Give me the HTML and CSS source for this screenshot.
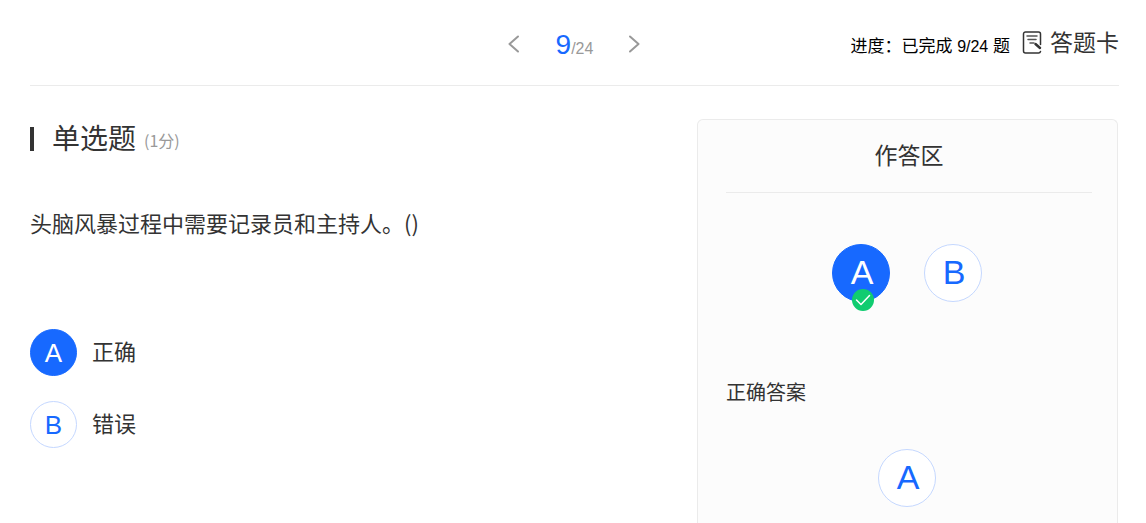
FILE: index.html
```html
<!DOCTYPE html>
<html lang="zh-CN">
<head>
<meta charset="utf-8">
<meta name="viewport" content="width=device-width, initial-scale=1">
<title>单选题</title>
<link rel="stylesheet" href="styles.css">
</head>
<body>
<div class="page">
  <header class="topbar">
    <nav class="pager" aria-label="题目导航">
      <button class="pager-btn" type="button" aria-label="上一题">
        <svg width="12" height="18" viewBox="0 0 12 18"><path d="M10 1.500 1.500 9l8.500 7.500"/></svg>
      </button>
      <div class="pager-count"><span class="pager-current">9</span><span class="pager-total">/24</span></div>
      <button class="pager-btn" type="button" aria-label="下一题">
        <svg width="12" height="18" viewBox="0 0 12 18"><path d="M1 1.500 9.500 9 1 16.500"/></svg>
      </button>
    </nav>
    <div class="status">
      <span class="progress">进度：已完成 <span class="progress-count">9/24</span> 题</span>
      <button class="card-btn" type="button">
        <svg class="card-icon" width="20" height="23" viewBox="0 0 20 23">
          <path d="M18.500 13.500V3a2 2 0 0 0-2-2h-13a2 2 0 0 0-2 2v17a2 2 0 0 0 2 2h13a2 2 0 0 0 2-1.500"/>
          <path class="lines" d="M5 5h10M6 8.500h8M8 12h4"/>
          <path class="pen" d="m13.500 13 4.500 4"/>
        </svg>
        <span>答题卡</span>
      </button>
    </div>
  </header>
  <main class="content">
    <section class="question">
      <h1 class="question-type">单选题<span class="score">(1分)</span></h1>
      <p class="question-text">头脑风暴过程中需要记录员和主持人。()</p>
      <ul class="options">
        <li><button class="option" type="button"><span class="letter selected">A</span><span class="option-label">正确</span></button></li>
        <li><button class="option" type="button"><span class="letter">B</span><span class="option-label">错误</span></button></li>
      </ul>
    </section>
    <aside class="panel">
      <h2 class="panel-title">作答区</h2>
      <div class="choices">
        <button class="letter large selected" type="button">A
          <svg class="check" width="22" height="22" viewBox="0 0 22 22"><circle cx="11" cy="11" r="11"/><path d="m4.500 11 4.500 4.500 8.500-9"/></svg>
        </button>
        <button class="letter large" type="button">B</button>
      </div>
      <h3 class="answer-title">正确答案</h3>
      <div class="answer"><span class="letter large">A</span></div>
    </aside>
  </main>
</div>
</body>
</html>
```
FILE: styles.css
```css
* { box-sizing: border-box; }

body {
  margin: 0;
  background: #fff;
  color: #333;
  font-family: "Liberation Sans", "Noto Sans CJK SC", sans-serif;
}

button {
  padding: 0;
  border: 0;
  background: none;
  color: inherit;
  font: inherit;
  cursor: pointer;
}

svg {
  display: block;
  fill: none;
  stroke-linecap: round;
  stroke-linejoin: round;
}

.page {
  display: flex;
  flex-direction: column;
  min-height: 100vh;
  padding: 0 27px 0 30px;
}

.topbar {
  display: grid;
  grid-template-columns: 1fr auto 1fr;
  align-items: center;
  height: 86px;
  border-bottom: 1px solid #ebebeb;
}

.pager {
  display: flex;
  grid-column: 2;
  align-items: center;
  gap: 36px;
  padding-top: 3px;
}

.pager-btn { stroke: #999; stroke-width: 2; }
.pager-count { padding-top: 5px; color: #999; line-height: 32px; }
.pager-current { color: #1769ff; font-size: 28px; }
.pager-total { font-size: 16px; }

.status {
  display: flex;
  justify-content: flex-end;
  align-items: center;
  gap: 12px;
  white-space: nowrap;
}

.progress { padding-top: 4px; color: #000; font-size: 17px; }
.progress-count { font-size: 16px; }

.card-btn {
  display: flex;
  align-items: center;
  gap: 8px;
  font-size: 23px;
  line-height: 32px;
}

.card-icon { stroke: #333; stroke-width: 1.5; }
.lines { stroke: #555; }
.pen { stroke-width: 2.5; }

.content {
  display: flex;
  flex: 1;
  justify-content: space-between;
  padding: 33px 1px 0 0;
}

.question {
  flex: 1;
  font-family: "Noto Sans CJK SC", sans-serif;
}

.question-type {
  display: flex;
  align-items: center;
  position: relative;
  margin: 0;
  padding-left: 22px;
  font-size: 28px;
  font-weight: 400;
  line-height: 36px;
}

.question-type::before {
  content: "";
  position: absolute;
  top: 8px;
  left: 0;
  width: 4px;
  height: 24px;
  background: #333;
}

.score {
  margin-left: 8px;
  padding-top: 6px;
  color: #999;
  font-size: 16px;
  line-height: 30px;
}

.question-text {
  margin: 51px 0 0;
  font-size: 22px;
  line-height: 32px;
}

.options {
  display: grid;
  gap: 25px;
  margin: 91px 0 0;
  padding: 0;
  list-style: none;
}

.option {
  display: flex;
  align-items: center;
  gap: 15px;
  font-size: 22px;
  line-height: 32px;
}

.option-label { padding-bottom: 5px; }

.letter {
  display: flex;
  position: relative;
  justify-content: center;
  align-items: center;
  width: 47px;
  height: 47px;
  border: 1px solid #c5d8ff;
  border-radius: 50%;
  background: #fff;
  color: #1769ff;
  font-family: "Liberation Sans", sans-serif;
  font-size: 26px;
  line-height: 1;
}

.large {
  width: 58px;
  height: 58px;
  padding: 0 0 2px 2px;
  font-size: 34px;
}

.selected {
  border-color: #1769ff;
  background: #1769ff;
  color: #fff;
}

.check {
  position: absolute;
  bottom: -10px;
  left: 19px;
  stroke: #fff;
  stroke-width: 1.5;
}

.check circle { fill: #10cc70; stroke: none; }

.panel {
  width: 38.7%;
  padding: 0 25px 16px 28px;
  border: 1px solid #ebebeb;
  border-bottom: 0;
  border-radius: 6px 6px 0 0;
  background: #fcfcfc;
}

.panel-title {
  margin: 0;
  padding: 20px 0;
  border-bottom: 1px solid #ebebeb;
  font-size: 23px;
  font-weight: 400;
  line-height: 32px;
  text-align: center;
}

.choices {
  display: flex;
  justify-content: center;
  gap: 34px;
  padding: 51px 4px 0 0;
}

.answer-title {
  margin: 75px 0 0;
  font-size: 20px;
  font-weight: 400;
  line-height: 32px;
}

.answer {
  display: flex;
  justify-content: center;
  margin-top: 40px;
  padding-right: 4px;
}
```
